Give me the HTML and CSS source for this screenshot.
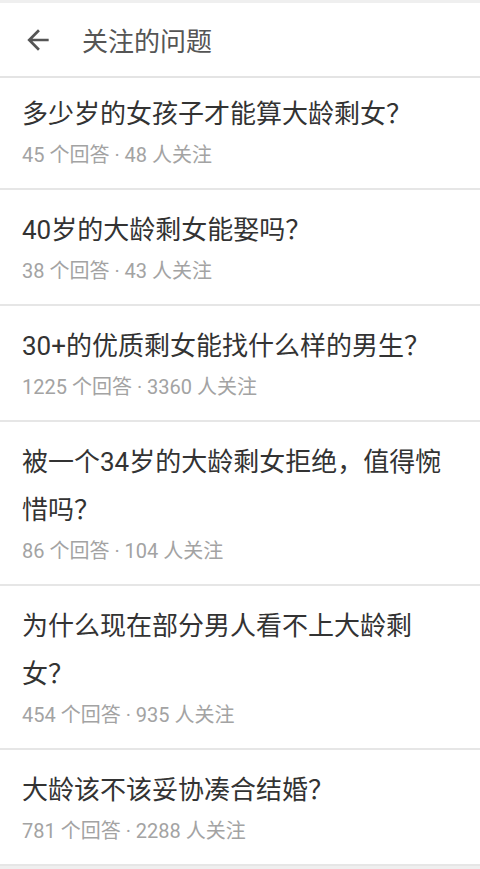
FILE: index.html
```html
<!DOCTYPE html>
<html lang="zh-CN">
  <head>
    <meta charset="UTF-8" />
    <meta name="viewport" content="width=device-width, initial-scale=1.0" />
    <title>关注的问题</title>
    <link rel="stylesheet" href="styles.css">
  </head>
  <body>
    <header class="topbar">
      <svg class="back" viewBox="0 0 24 24" width="32" height="32">
        <path d="M20 11H7.83l5.59-5.59L12 4l-8 8 8 8 1.41-1.41L7.83 13H20v-2z" />
      </svg>
      <h1>关注的问题</h1>
    </header>

    <ul class="questions">
      <li class="question">
        <div class="title">多少岁的女孩子才能算大龄剩女？</div>
        <div class="meta">45 个回答 · 48 人关注</div>
      </li>
      <li class="question">
        <div class="title">40岁的大龄剩女能娶吗？</div>
        <div class="meta">38 个回答 · 43 人关注</div>
      </li>
      <li class="question">
        <div class="title">30+的优质剩女能找什么样的男生？</div>
        <div class="meta">1225 个回答 · 3360 人关注</div>
      </li>
      <li class="question">
        <div class="title">被一个34岁的大龄剩女拒绝，值得惋惜吗？</div>
        <div class="meta">86 个回答 · 104 人关注</div>
      </li>
      <li class="question">
        <div class="title">为什么现在部分男人看不上大龄剩女？</div>
        <div class="meta">454 个回答 · 935 人关注</div>
      </li>
      <li class="question">
        <div class="title">大龄该不该妥协凑合结婚？</div>
        <div class="meta">781 个回答 · 2288 人关注</div>
      </li>
    </ul>
  </body>
</html>
```

FILE: styles.css
```css
body {
  font-family: Roboto, "Noto Sans CJK SC", sans-serif;
  background-color: #efefef;
  margin: 0;
  padding-top: 3px;
}
.topbar {
  display: flex;
  align-items: center;
  height: 73px;
  padding: 0 22px;
  background-color: white;
  border-bottom: 2px solid #e4e4e4;
}
.back {
  fill: #555;
  flex: none;
}
.topbar h1 {
  margin: 0 0 0 28px;
  font-size: 26px;
  font-weight: normal;
  color: #555;
}
.questions {
  list-style: none;
  margin: 0;
  padding: 0;
}
.question {
  background-color: white;
  padding: 16px 22px 20px;
  border-bottom: 2px solid #e6e6e6;
}
.question:first-child {
  padding-top: 12px;
}
.title {
  font-size: 26px;
  line-height: 48px;
  color: #333;
}
.meta {
  margin-top: 4px;
  font-size: 20px;
  line-height: 26px;
  color: #a3a3a3;
}
```
